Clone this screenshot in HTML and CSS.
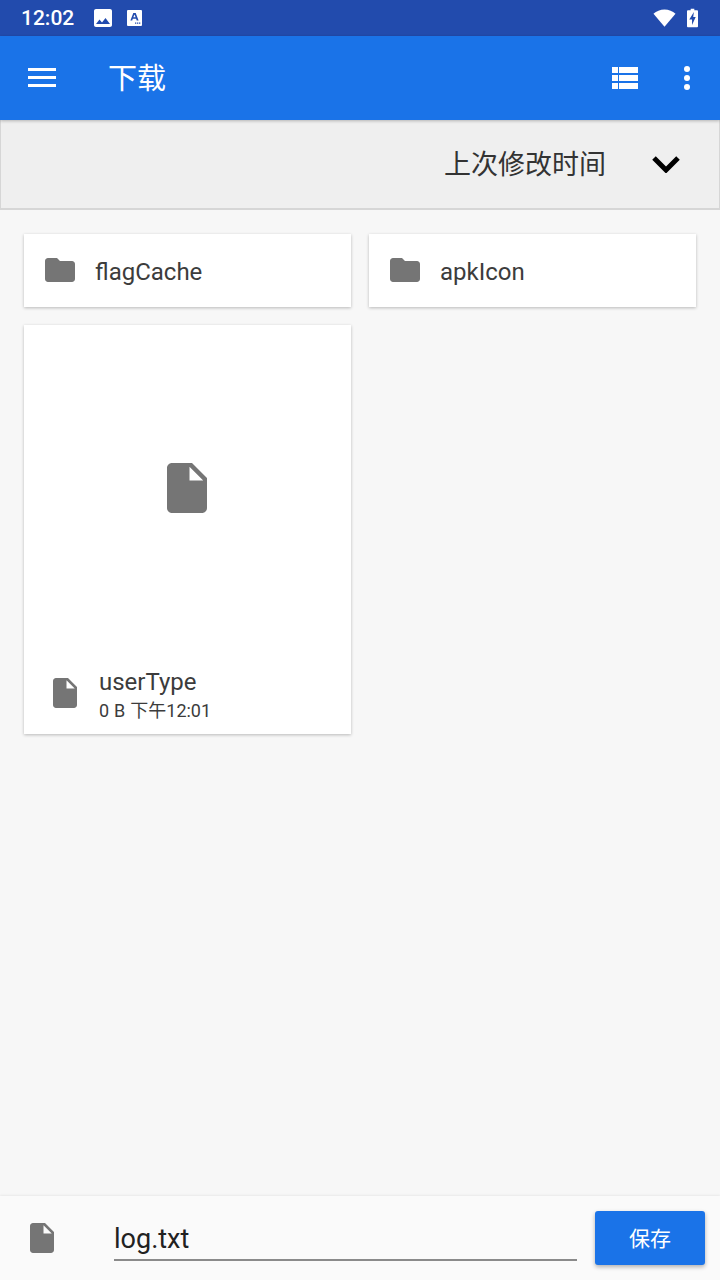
FILE: index.html
```html
<!DOCTYPE html>
<html lang="zh-CN">
<head>
    <meta charset="UTF-8">
    <meta name="viewport" content="width=device-width, initial-scale=1.0">
    <title>下载</title>
    <link rel="stylesheet" href="styles.css">
</head>
<body>
    <div class="status-bar">
        <span class="clock">12:02</span>
        <svg class="status-photo" viewBox="0 0 18 18"><path fill="#fff" d="M18 16V2c0-1.100-.9-2-2-2H2C.9 0 0 .9 0 2v14c0 1.100.9 2 2 2h14c1.100 0 2-.9 2-2zM5.500 10.500l2.500 3 3.500-4.500 4.500 6H2l3.500-4.500z"/></svg>
        <svg class="status-a" viewBox="0 0 15 16"><path fill="#fff" fill-rule="evenodd" d="M1 0h13a1 1 0 0 1 1 1v14a1 1 0 0 1-1 1H1a1 1 0 0 1-1-1V1a1 1 0 0 1 1-1zM6.300 3 3.400 10.500h1.800l.6-1.700h3.300l.6 1.700h1.900L8.700 3H6.300zM6.300 7.300 7.500 4.600l1.100 2.700H6.300zM8 12.500h1.300v1.300H8zM10 12.500h1.300v1.300H10zM12 12.500h1.300v1.300H12z"/></svg>
        <span class="status-space"></span>
        <svg class="status-wifi" viewBox="0 0 24 18"><path fill="#fff" d="M12 18 .5 4.500C3.500 1.800 7.500 0 12 0s8.500 1.800 11.500 4.500L12 18z"/></svg>
        <svg class="status-battery" viewBox="0 0 12 20"><path fill="#fff" fill-rule="evenodd" d="M4 0h4v1.500h3a1 1 0 0 1 1 1V19a1 1 0 0 1-1 1H1a1 1 0 0 1-1-1V2.500a1 1 0 0 1 1-1h3V0zM7.500 3.500 2.500 11.500h3v6l4-8.500H6.800l.7-5.500z"/></svg>
    </div>

    <header class="toolbar">
        <svg class="menu-icon" viewBox="0 0 28 20"><path fill="#fff" d="M0 0h28v3H0zM0 8h28v3H0zM0 16h28v3H0z"/></svg>
        <h1 class="toolbar-title">下载</h1>
        <svg class="list-icon" viewBox="0 0 26 22"><path fill="#fff" d="M0 0h6v6H0zM7 0h19v6H7zM0 8h6v6H0zM7 8h19v6H7zM0 16h6v6H0zM7 16h19v6H7z"/></svg>
        <svg class="more-icon" viewBox="0 0 8 24"><circle fill="#fff" cx="4" cy="3" r="3"/><circle fill="#fff" cx="4" cy="12" r="3"/><circle fill="#fff" cx="4" cy="21" r="3"/></svg>
    </header>

    <div class="sort-bar">
        <span class="sort-label">上次修改时间</span>
        <svg class="sort-arrow" viewBox="0 0 28 18"><path fill="none" stroke="#000" stroke-width="5" d="M2 3l12 12L26 3"/></svg>
    </div>

    <main class="file-grid">
        <div class="card folder-card">
            <svg class="icon-36" viewBox="0 0 24 24"><path fill="#757575" d="M10 4H4c-1.100 0-2 .9-2 2v12c0 1.100.9 2 2 2h16c1.100 0 2-.9 2-2V8c0-1.100-.9-2-2-2h-8l-2-2z"/></svg>
            <span class="card-name">flagCache</span>
        </div>
        <div class="card folder-card">
            <svg class="icon-36" viewBox="0 0 24 24"><path fill="#757575" d="M10 4H4c-1.100 0-2 .9-2 2v12c0 1.100.9 2 2 2h16c1.100 0 2-.9 2-2V8c0-1.100-.9-2-2-2h-8l-2-2z"/></svg>
            <span class="card-name">apkIcon</span>
        </div>
        <div class="card file-card">
            <div class="file-preview">
                <svg class="icon-60" viewBox="0 0 24 24"><path fill="#757575" d="M6 2c-1.100 0-2 .9-2 2v16c0 1.100.9 2 2 2h12c1.100 0 2-.9 2-2V8l-6-6H6zm7 7V3.500L18.500 9H13z"/></svg>
            </div>
            <div class="file-info">
                <svg class="icon-36" viewBox="0 0 24 24"><path fill="#757575" d="M6 2c-1.100 0-2 .9-2 2v16c0 1.100.9 2 2 2h12c1.100 0 2-.9 2-2V8l-6-6H6zm7 7V3.500L18.500 9H13z"/></svg>
                <div class="file-text">
                    <div class="card-name">userType</div>
                    <div class="file-meta">0 B 下午12:01</div>
                </div>
            </div>
        </div>
    </main>

    <footer class="save-bar">
        <svg class="icon-36" viewBox="0 0 24 24"><path fill="#757575" d="M6 2c-1.100 0-2 .9-2 2v16c0 1.100.9 2 2 2h12c1.100 0 2-.9 2-2V8l-6-6H6zm7 7V3.500L18.500 9H13z"/></svg>
        <div class="name-field">log.txt</div>
        <button class="save-btn">保存</button>
    </footer>
</body>
</html>
```

FILE: styles.css
```css
* {
    margin: 0;
    padding: 0;
    box-sizing: border-box;
}

body {
    width: 720px;
    height: 1280px;
    display: flex;
    flex-direction: column;
    overflow: hidden;
    background: #f7f7f7;
    font-family: Roboto, "Noto Sans CJK SC", sans-serif;
}

.status-bar {
    height: 36px;
    display: flex;
    align-items: center;
    padding: 0 22px 0 21px;
    background: #224bad;
}

.clock {
    width: 54px;
    color: #fff;
    font-size: 21px;
    font-weight: 500;
}

.status-photo {
    width: 18px;
    height: 18px;
    margin-left: 19px;
}

.status-a {
    width: 15px;
    height: 16px;
    margin-left: 15px;
}

.status-space {
    flex: 1;
}

.status-wifi {
    width: 23px;
    height: 18px;
}

.status-battery {
    width: 11px;
    height: 20px;
    margin-left: 11px;
}

.toolbar {
    height: 84px;
    display: flex;
    align-items: center;
    padding: 0 29px 0 28px;
    background: #1a73e8;
    position: relative;
    box-shadow: 0 1px 3px rgba(0, 0, 0, 0.25);
}

.menu-icon {
    width: 28px;
    height: 20px;
}

.toolbar-title {
    flex: 1;
    margin: 0 0 4px 52px;
    color: #fff;
    font-size: 29px;
    font-weight: 400;
}

.list-icon {
    width: 26px;
    height: 22px;
    margin-right: 45px;
}

.more-icon {
    width: 8px;
    height: 24px;
}

.sort-bar {
    height: 90px;
    display: flex;
    align-items: center;
    justify-content: flex-end;
    padding-right: 39px;
    background: #efefef;
    border: 1px solid #d6d6d6;
    border-width: 0 1px 2px 1px;
}

.sort-label {
    margin: 0 46px 3px 0;
    color: #333;
    font-size: 27px;
}

.sort-arrow {
    width: 28px;
    height: 18px;
}

.file-grid {
    flex: 1;
    display: grid;
    grid-template-columns: 327px 327px;
    grid-auto-rows: min-content;
    column-gap: 18px;
    row-gap: 18px;
    padding: 24px 0 0 24px;
}

.card {
    background: #fff;
    box-shadow: 0 1px 3px rgba(0, 0, 0, 0.25);
}

.folder-card {
    height: 73px;
    display: flex;
    align-items: center;
    padding-left: 18px;
}

.folder-card .icon-36 {
    margin-bottom: 1px;
}

.card-name {
    color: #3c3c3c;
    font-size: 24px;
}

.folder-card .card-name {
    margin: 2px 0 0 17px;
}

.icon-36 {
    width: 36px;
    height: 36px;
    flex-shrink: 0;
}

.icon-60 {
    width: 60px;
    height: 60px;
    margin-right: 1px;
}

.file-card {
    height: 409px;
    display: flex;
    flex-direction: column;
}

.file-preview {
    flex: 1;
    display: flex;
    align-items: center;
    justify-content: center;
    padding-bottom: 1px;
}

.file-info {
    height: 82px;
    display: flex;
    align-items: center;
    padding-left: 23px;
}

.file-text {
    margin: 4px 0 0 16px;
}

.file-meta {
    color: #3c3c3c;
    font-size: 18px;
    word-spacing: 0.5px;
}

.save-bar {
    height: 84px;
    display: flex;
    align-items: center;
    padding: 0 15px 0 24px;
    background: #fafafa;
    box-shadow: 0 -1px 2px rgba(0, 0, 0, 0.06);
}

.name-field {
    width: 463px;
    height: 49px;
    margin: 0 18px 3px 54px;
    padding-top: 11px;
    color: #212121;
    font-size: 27px;
    border-bottom: 2px solid #8a8a8a;
}

.save-btn {
    width: 110px;
    height: 54px;
    padding-bottom: 2px;
    border: none;
    border-radius: 3px;
    background: #1a73e8;
    color: #fff;
    font-family: inherit;
    font-size: 21px;
    box-shadow: 0 2px 4px rgba(0, 0, 0, 0.3);
}
```
